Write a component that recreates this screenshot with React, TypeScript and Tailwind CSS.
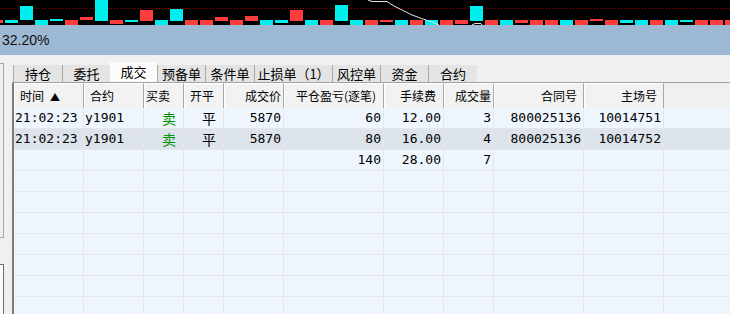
import React from 'react';

type Bar = [number, number, number, 'c' | 'r'];

const bars: Bar[] = [
  [-10, 20, 23, 'r'], [5, 20, 23, 'c'], [20, 6, 20, 'c'], [35, 20, 25, 'c'], [50, 19, 21, 'c'],
  [65, 20, 25, 'r'], [80, 17, 20, 'r'], [95, 0, 21, 'c'], [110, 20, 24, 'r'], [125, 20, 22, 'c'],
  [140, 10, 21, 'r'], [155, 20, 25, 'c'], [170, 9, 21, 'c'], [185, 20, 25, 'r'], [200, 20, 25, 'r'],
  [215, 17, 21, 'r'], [230, 20, 25, 'r'], [245, 16, 21, 'r'], [260, 20, 25, 'c'], [275, 20, 23, 'c'],
  [290, 10, 21, 'r'], [305, 20, 25, 'c'], [320, 20, 25, 'r'], [335, 5, 21, 'c'], [350, 20, 25, 'c'],
  [365, 20, 25, 'r'], [380, 20, 22, 'r'], [395, 20, 25, 'c'], [410, 20, 25, 'r'], [425, 20, 25, 'c'],
  [440, 20, 25, 'r'], [455, 20, 24, 'r'], [470, 6, 21, 'c'], [485, 20, 25, 'r'], [500, 20, 25, 'c'],
  [515, 20, 23, 'r'], [530, 20, 25, 'r'], [545, 20, 25, 'r'], [560, 20, 25, 'c'], [575, 20, 25, 'r'],
  [590, 19, 21, 'r'], [605, 20, 25, 'r'], [620, 20, 23, 'c'], [635, 20, 25, 'c'], [650, 20, 25, 'r'],
  [665, 20, 25, 'c'], [680, 20, 22, 'c'], [695, 20, 25, 'r'], [710, 20, 25, 'r'], [725, 20, 25, 'r'],
];

const tabs = ['持仓', '委托', '成交', '预备单', '条件单', '止损单（1）', '风控单', '资金', '合约'];
const tabWidths = [49, 48, 47, 48, 49, 78, 48, 48, 49];

type Col = { title: React.ReactNode; w: string; head: string; cell: string };

const cols: Col[] = [
  { title: <>时间<span className="ml-[6px] text-[10px]">▲</span></>, w: 'w-[70px]', head: 'justify-start pl-[6px]', cell: 'justify-start pl-[1px]' },
  { title: '合约', w: 'w-[60px]', head: 'justify-start pl-[6px]', cell: 'justify-start pl-[1px]' },
  { title: '买卖', w: 'w-[40px]', head: 'justify-start pl-[2px]', cell: 'justify-start pl-[18px]' },
  { title: '开平', w: 'w-[40px]', head: 'justify-start pl-[6px]', cell: 'justify-start pl-[18px]' },
  { title: '成交价', w: 'w-[60px]', head: 'justify-end pr-[2px]', cell: 'justify-end pr-[2px]' },
  { title: '平仓盈亏(逐笔)', w: 'w-[100px]', head: 'justify-end pr-[7px]', cell: 'justify-end pr-[2px]' },
  { title: '手续费', w: 'w-[60px]', head: 'justify-end pr-[7px]', cell: 'justify-end pr-[2px]' },
  { title: '成交量', w: 'w-[50px]', head: 'justify-end pr-[2px]', cell: 'justify-end pr-[2px]' },
  { title: '合同号', w: 'w-[90px]', head: 'justify-end pr-[6px]', cell: 'justify-end pr-[2px]' },
  { title: '主场号', w: 'w-[80px]', head: 'justify-end pr-[6px]', cell: 'justify-end pr-[2px]' },
];

const rows: string[][] = [
  ['21:02:23', 'y1901', '卖', '平', '5870', '60', '12.00', '3', '800025136', '10014751'],
  ['21:02:23', 'y1901', '卖', '平', '5870', '80', '16.00', '4', '800025136', '10014752'],
  ['', '', '', '', '', '140', '28.00', '7', '', ''],
  ...Array.from({ length: 8 }, () => Array(10).fill('')),
];

const mono = { fontFamily: '"DejaVu Sans Mono", "Liberation Mono", monospace' };
const cjk = { fontFamily: '"Noto Sans CJK SC", "Liberation Sans", sans-serif' };

function Chart() {
  return (
    <div className="h-[25px] bg-black shrink-0 overflow-hidden">
      <svg width="730" height="25" viewBox="0 0 730 25">
        <line x1="0" y1="8.5" x2="730" y2="8.5" stroke="#b00000" strokeDasharray="1 2" />
        {bars.map(([x, t, b, c], i) => (
          <rect key={i} x={x} y={t} width={13} height={b - t} fill={c === 'c' ? '#00eeee' : '#ff3d3d'} />
        ))}
        <polyline
          points="368,0 372,1.5 387,1.5 390,3.5 395,6.5 402,10 412,15 423,19 432,22 439,25"
          fill="none"
          stroke="#e6e6e6"
          strokeWidth="1"
        />
        <polyline points="472,25 475,23.5 481,23.5 482,25" fill="none" stroke="#e6e6e6" strokeWidth="1" />
      </svg>
    </div>
  );
}

function Tabs() {
  return (
    <div className="flex items-end h-[20px] mt-[7px] pl-[1px]" style={cjk}>
      {tabs.map((t, i) =>
        i === 2 ? (
          <div
            key={t}
            className="h-[20px] bg-[#fbfbfb] flex items-center justify-center text-[13px] text-black"
            style={{ width: tabWidths[i] }}
          >
            {t}
          </div>
        ) : (
          <div
            key={t}
            className="h-[17px] bg-[#e4e4e4] border-l border-[#a8a8a8] flex items-center justify-center text-[13px] text-black"
            style={{ width: tabWidths[i] }}
          >
            {t}
          </div>
        ),
      )}
    </div>
  );
}

function Table() {
  return (
    <div className="flex-1 border-t border-[#a0a0a0] flex flex-col overflow-hidden">
      <div className="flex-1 border-l-2 border-[#7c7c7c] flex flex-col">
        <div className="h-[25px] flex shrink-0" style={cjk}>
          {cols.map((c, i) => (
            <div
              key={i}
              className={`${c.w} ${c.head} h-full bg-[#f2f2f2] border-t border-white border-r border-r-[#a8a8a8] shadow-[inset_1px_0_0_#ffffff] flex items-center text-[12px] text-black whitespace-nowrap`}
            >
              {c.title}
            </div>
          ))}
          <div className="flex-1" />
        </div>
        {rows.map((r, ri) => (
          <div
            key={ri}
            className={`h-[21px] flex shrink-0 border-b border-[#e4e6ea] ${ri === 1 ? 'bg-[#dce3eb]' : 'bg-[#eef5fd]'}`}
          >
            {r.map((v, ci) => (
              <div
                key={ci}
                className={`${cols[ci].w} ${cols[ci].cell} h-full border-r border-[#e4e6ea] flex items-center whitespace-nowrap ${
                  ci === 2 ? 'text-[14px] text-[#009000]' : ci === 3 ? 'text-[14px] text-black' : 'text-[13px] text-black'
                }`}
                style={ci === 2 || ci === 3 ? cjk : mono}
              >
                {v}
              </div>
            ))}
            <div className="flex-1" />
          </div>
        ))}
      </div>
    </div>
  );
}

export default function App() {
  return (
    <div className="w-[730px] h-[314px] overflow-hidden bg-[#f0f0f0] flex flex-col">
      <Chart />
      <div
        className="h-[30px] bg-[#9db8d3] shrink-0 flex items-center pl-[2px] text-[14px] text-[#111]"
        style={{ fontFamily: '"Liberation Sans", sans-serif' }}
      >
        32.20%
      </div>
      <div className="flex-1 flex">
        <div className="w-[12px] shrink-0 flex flex-col">
          <div className="mt-[8px] h-[175px] w-[4px] border-t border-r border-b border-[#a8a8a8]" />
          <div className="mt-[26px] flex-1 w-[4px] border-t border-r border-[#6e6e6e] bg-[#fbfbfb]" />
        </div>
        <div className="flex-1 flex flex-col">
          <Tabs />
          <Table />
        </div>
      </div>
    </div>
  );
}
